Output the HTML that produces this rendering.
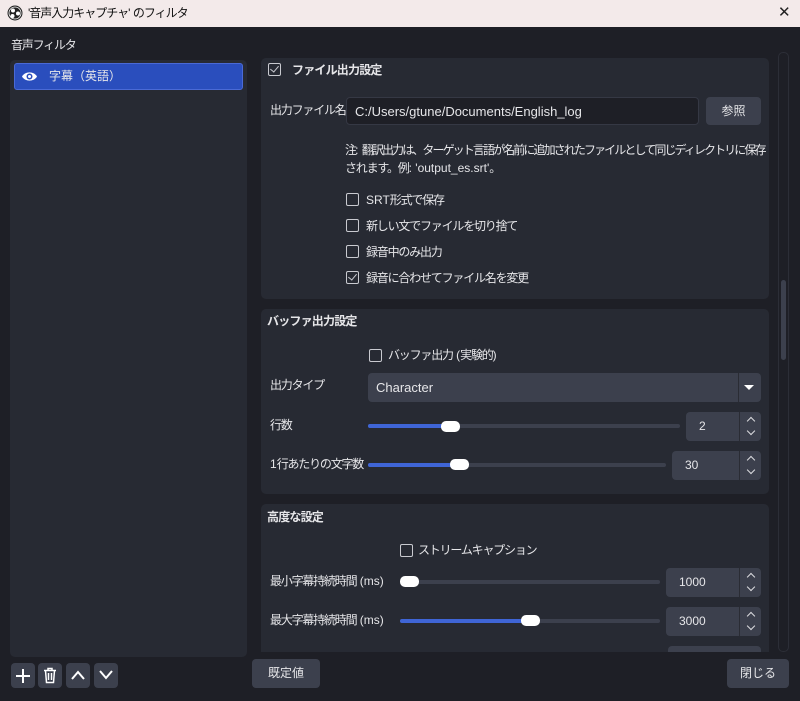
<!DOCTYPE html>
<html><head><meta charset="utf-8"><style>
*{box-sizing:border-box;margin:0;padding:0}
body{width:800px;height:701px;background:#1e1f26;font-family:"Liberation Sans","Noto Sans CJK JP",sans-serif;color:#e6e6e9;font-size:12px;letter-spacing:-1.2px;position:relative;overflow:hidden}
.a{position:absolute}
.t{position:absolute;white-space:nowrap;line-height:16px}
.n{letter-spacing:0}
.panel{position:absolute;background:#272a33;border-radius:5px}
.cb{position:absolute;width:13px;height:13px;border:1.5px solid #c9cad0;border-radius:2px}
.cb.on::after{content:"";position:absolute;left:3px;top:0px;width:4px;height:7px;border:solid #c9cad0;border-width:0 1.5px 1.5px 0;transform:rotate(40deg)}
.btn{position:absolute;background:#3c404d;border-radius:4px;text-align:center;color:#e6e6e9;letter-spacing:0}
.spin{position:absolute;background:#3c404d;border-radius:4px;letter-spacing:0}
.spin .v{position:absolute;left:13px;top:7px}
.spin .ar{position:absolute;right:0;top:0;width:22px;height:100%;border-left:1px solid #2a2c34}
.spin .ar i{position:absolute;left:8px;width:6px;height:6px;border:solid #dcdce0;border-width:1.5px 0 0 1.5px}
.track{position:absolute;height:4px;background:#3c404d;border-radius:2px}
.fill{position:absolute;height:4px;background:#3f65d6;border-radius:2px}
.thumb{position:absolute;width:19px;height:11px;background:#fff;border-radius:5px}
</style></head><body>
<div class="a" style="left:0;top:0;width:800px;height:27px;background:#f3eaea"></div>
<svg class="a" style="left:7px;top:5px" width="16" height="16" viewBox="0 0 16 16"><circle cx="8" cy="8" r="7.5" fill="#222"/><circle cx="8" cy="8" r="6" fill="none" stroke="#fff" stroke-width="0.8"/><circle cx="6" cy="5.5" r="2" fill="#fff"/><circle cx="11" cy="8.5" r="2" fill="#fff"/><circle cx="5.5" cy="11" r="2" fill="#fff"/></svg>
<div class="t" style="left:28px;top:5px;color:#111;font-size:12px;letter-spacing:-1px">'音声入力キャプチャ'<span class="n"> </span>のフィルタ</div>
<div class="t" style="left:778px;top:5px;color:#222;font-size:15px">✕</div>

<div class="t" style="left:11px;top:37px">音声フィルタ</div>
<div class="panel" style="left:10px;top:60px;width:237px;height:597px"></div>
<div class="a" style="left:14px;top:63px;width:229px;height:27px;background:#2a4ebd;border:1px solid #4a6ad6;border-radius:3px"></div>
<svg class="a" style="left:21px;top:70px" width="17" height="13" viewBox="0 0 17 13"><path d="M1 6.5C4 1 13 1 16 6.5C13 12 4 12 1 6.5Z" fill="#fff"/><circle cx="8.5" cy="6.5" r="3" fill="#2a4ebd"/><circle cx="8.5" cy="6.5" r="1.5" fill="#fff"/></svg>
<div class="t" style="left:49px;top:68px;letter-spacing:0">字幕（英語）</div>

<!-- panel 1 -->
<div class="panel" style="left:261px;top:58px;width:508px;height:241px"></div>
<div class="cb on" style="left:268px;top:63px"></div>
<div class="t" style="left:292px;top:62px;font-weight:bold;letter-spacing:-0.8px">ファイル出力設定</div>
<div class="t" style="left:270px;top:102px">出力ファイル名</div>
<div class="a" style="left:346px;top:97px;width:353px;height:28px;background:#1e1f26;border:1px solid #353844;border-radius:4px"></div>
<div class="t n" style="left:355px;top:104px;font-size:13px">C:/Users/gtune/Documents/English_log</div>
<div class="btn" style="left:706px;top:97px;width:55px;height:28px;line-height:28px">参照</div>
<div class="t" style="left:345px;top:142px;letter-spacing:-1.9px">注<span class="n">: </span>翻訳出力は、ターゲット言語が名前に追加されたファイルとして同じディレクトリに保存</div>
<div class="t" style="left:345px;top:160px">されます。例<span class="n">: 'output_es.srt'</span>。</div>
<div class="cb" style="left:346px;top:193px"></div><div class="t" style="left:366px;top:192px"><span class="n">SRT</span>形式で保存</div>
<div class="cb" style="left:346px;top:219px"></div><div class="t" style="left:366px;top:218px">新しい文でファイルを切り捨て</div>
<div class="cb" style="left:346px;top:245px"></div><div class="t" style="left:366px;top:244px">録音中のみ出力</div>
<div class="cb on" style="left:346px;top:271px"></div><div class="t" style="left:366px;top:270px">録音に合わせてファイル名を変更</div>

<!-- panel 2 -->
<div class="panel" style="left:261px;top:309px;width:508px;height:185px"></div>
<div class="t" style="left:267px;top:313px;font-weight:bold;letter-spacing:-0.8px">バッファ出力設定</div>
<div class="cb" style="left:369px;top:349px"></div><div class="t" style="left:388px;top:347px">バッファ出力<span class="n"> (</span>実験的<span class="n">)</span></div>
<div class="t" style="left:270px;top:377px">出力タイプ</div>
<div class="a" style="left:368px;top:373px;width:393px;height:29px;background:#3c404d;border-radius:4px"></div>
<div class="a" style="left:738px;top:373px;width:1px;height:29px;background:#2a2c34"></div>
<div class="t n" style="left:376px;top:380px;font-size:13px">Character</div>
<div class="a" style="left:744px;top:385px;border-left:5px solid transparent;border-right:5px solid transparent;border-top:5px solid #fff"></div>
<div class="t" style="left:270px;top:417px">行数</div>
<div class="track" style="left:368px;top:424px;width:312px"></div><div class="fill" style="left:368px;top:424px;width:80px"></div><div class="thumb" style="left:441px;top:421px"></div>
<div class="spin" style="left:686px;top:412px;width:75px;height:29px"><div class="v">2</div><div class="ar"><i style="top:6px;transform:rotate(45deg)"></i><i style="top:16px;transform:rotate(225deg)"></i></div></div>
<div class="t" style="left:270px;top:456px"><span class="n">1</span>行あたりの文字数</div>
<div class="track" style="left:368px;top:463px;width:298px"></div><div class="fill" style="left:368px;top:463px;width:88px"></div><div class="thumb" style="left:450px;top:459px"></div>
<div class="spin" style="left:672px;top:451px;width:89px;height:29px"><div class="v">30</div><div class="ar"><i style="top:6px;transform:rotate(45deg)"></i><i style="top:16px;transform:rotate(225deg)"></i></div></div>

<!-- panel 3 -->
<div class="panel" style="left:261px;top:504px;width:508px;height:148px;border-radius:5px 5px 0 0"></div>
<div class="t" style="left:267px;top:509px;font-weight:bold;letter-spacing:-0.8px">高度な設定</div>
<div class="cb" style="left:400px;top:544px"></div><div class="t" style="left:418px;top:542px">ストリームキャプション</div>
<div class="t" style="left:270px;top:573px">最小字幕持続時間<span class="n"> (ms)</span></div>
<div class="track" style="left:400px;top:580px;width:260px"></div><div class="thumb" style="left:400px;top:576px"></div>
<div class="spin" style="left:666px;top:568px;width:95px;height:29px"><div class="v">1000</div><div class="ar"><i style="top:6px;transform:rotate(45deg)"></i><i style="top:16px;transform:rotate(225deg)"></i></div></div>
<div class="t" style="left:270px;top:612px">最大字幕持続時間<span class="n"> (ms)</span></div>
<div class="track" style="left:400px;top:619px;width:260px"></div><div class="fill" style="left:400px;top:619px;width:126px"></div><div class="thumb" style="left:521px;top:615px"></div>
<div class="spin" style="left:666px;top:607px;width:95px;height:29px"><div class="v">3000</div><div class="ar"><i style="top:6px;transform:rotate(45deg)"></i><i style="top:16px;transform:rotate(225deg)"></i></div></div>
<div class="a" style="left:668px;top:646px;width:93px;height:6px;background:#3c404d;border-radius:4px 4px 0 0"></div>

<!-- scrollbar -->
<div class="a" style="left:778px;top:52px;width:11px;height:600px;border:1px solid #2c2e37;border-radius:5px"></div>
<div class="a" style="left:781px;top:280px;width:5px;height:80px;background:#3c404d;border-radius:3px"></div>

<!-- bottom buttons -->
<div class="btn" style="left:11px;top:663px;width:24px;height:25px"></div>
<div class="a" style="left:16px;top:675px;width:14px;height:2px;background:#fff"></div><div class="a" style="left:22px;top:669px;width:2px;height:14px;background:#fff"></div>
<div class="btn" style="left:38px;top:663px;width:24px;height:25px"></div>
<svg class="a" style="left:42px;top:667px" width="16" height="17" viewBox="0 0 16 17"><path d="M2 3.5H14M6 3.5V1.5H10V3.5M3.5 3.5L4.5 15.5H11.5L12.5 3.5M6.5 6V13M9.5 6V13" fill="none" stroke="#fff" stroke-width="1.5"/></svg>
<div class="btn" style="left:66px;top:663px;width:24px;height:25px"></div>
<svg class="a" style="left:70px;top:669px" width="16" height="12" viewBox="0 0 16 12"><path d="M2 10L8 3L14 10" fill="none" stroke="#fff" stroke-width="2"/></svg>
<div class="btn" style="left:94px;top:663px;width:24px;height:25px"></div>
<svg class="a" style="left:98px;top:669px" width="16" height="12" viewBox="0 0 16 12"><path d="M2 2L8 9L14 2" fill="none" stroke="#fff" stroke-width="2"/></svg>
<div class="btn" style="left:252px;top:659px;width:68px;height:29px;line-height:29px">既定値</div>
<div class="btn" style="left:727px;top:659px;width:62px;height:29px;line-height:29px">閉じる</div>
</body></html>
